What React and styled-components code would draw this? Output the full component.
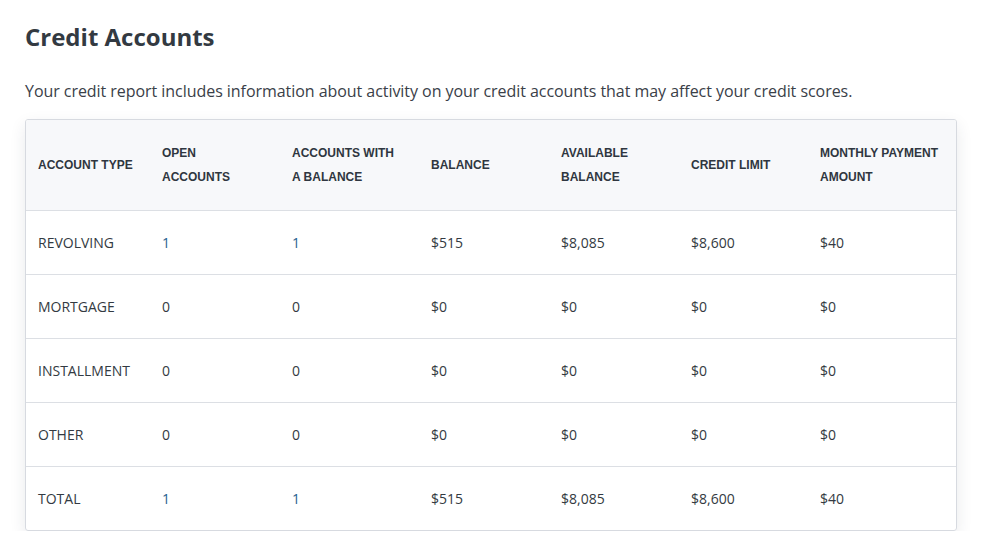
import styled, { createGlobalStyle } from "styled-components";

const GlobalStyle = createGlobalStyle`
  body {
    margin: 0;
    background: #ffffff;
    font-family: "Open Sans", "Liberation Sans", sans-serif;
    color: #333a42;
  }
`;

const Section = styled.section`
  padding: 20px 25px 0 25px;
  width: 932px;
`;

const Title = styled.h2`
  margin: 0;
  font-size: 24px;
  line-height: 34px;
  font-weight: 700;
  color: #333a42;
`;

const Intro = styled.p`
  margin: 25px 0 16px 0;
  font-size: 16px;
  line-height: 24px;
  letter-spacing: -0.05px;
  color: #3a4048;
`;

const Card = styled.div`
  border: 1px solid #d7dae0;
  border-radius: 3px;
  box-shadow: 0 6px 16px rgba(40, 50, 70, 0.1);
  overflow: hidden;
`;

const Table = styled.table`
  width: 100%;
  border-collapse: collapse;
  table-layout: fixed;
`;

const HeadCell = styled.th`
  background: #f7f8fa;
  height: 90px;
  padding: 0 12px;
  text-align: left;
  vertical-align: middle;
  font-family: "Liberation Sans", Arial, sans-serif;
  font-size: 12px;
  font-weight: 700;
  line-height: 24px;
  color: #2f3640;
  border-bottom: 1px solid #dcdfe4;
`;

const Row = styled.tr`
  & + & td {
    border-top: 1px solid #dcdfe4;
  }
`;

const Cell = styled.td`
  height: 63px;
  padding: 0 12px;
  font-size: 14px;
  color: ${(p) => (p.$link ? "#1f5f8f" : "#333a42")};
  vertical-align: middle;
`;

const columns = [
  { label: ["ACCOUNT TYPE"], width: 124 },
  { label: ["OPEN", "ACCOUNTS"], width: 130 },
  { label: ["ACCOUNTS WITH", "A BALANCE"], width: 139 },
  { label: ["BALANCE"], width: 130 },
  { label: ["AVAILABLE", "BALANCE"], width: 130 },
  { label: ["CREDIT LIMIT"], width: 129 },
  { label: ["MONTHLY PAYMENT", "AMOUNT"], width: 148 },
];

const rows = [
  ["REVOLVING", "1", "1", "$515", "$8,085", "$8,600", "$40"],
  ["MORTGAGE", "0", "0", "$0", "$0", "$0", "$0"],
  ["INSTALLMENT", "0", "0", "$0", "$0", "$0", "$0"],
  ["OTHER", "0", "0", "$0", "$0", "$0", "$0"],
  ["TOTAL", "1", "1", "$515", "$8,085", "$8,600", "$40"],
];

export default function App() {
  return (
    <>
      <GlobalStyle />
      <Section>
        <Title>Credit Accounts</Title>
        <Intro>
          Your credit report includes information about activity on your credit accounts that may
          affect your credit scores.
        </Intro>
        <Card>
          <Table>
            <colgroup>
              {columns.map((c, i) => (
                <col key={i} style={{ width: c.width }} />
              ))}
            </colgroup>
            <thead>
              <tr>
                {columns.map((c, i) => (
                  <HeadCell key={i}>
                    {c.label.map((l, j) => (
                      <div key={j}>{l}</div>
                    ))}
                  </HeadCell>
                ))}
              </tr>
            </thead>
            <tbody>
              {rows.map((r, i) => (
                <Row key={i}>
                  {r.map((v, j) => (
                    <Cell key={j} $link={(j === 1 || j === 2) && v !== "0"}>
                      {v}
                    </Cell>
                  ))}
                </Row>
              ))}
            </tbody>
          </Table>
        </Card>
      </Section>
    </>
  );
}
